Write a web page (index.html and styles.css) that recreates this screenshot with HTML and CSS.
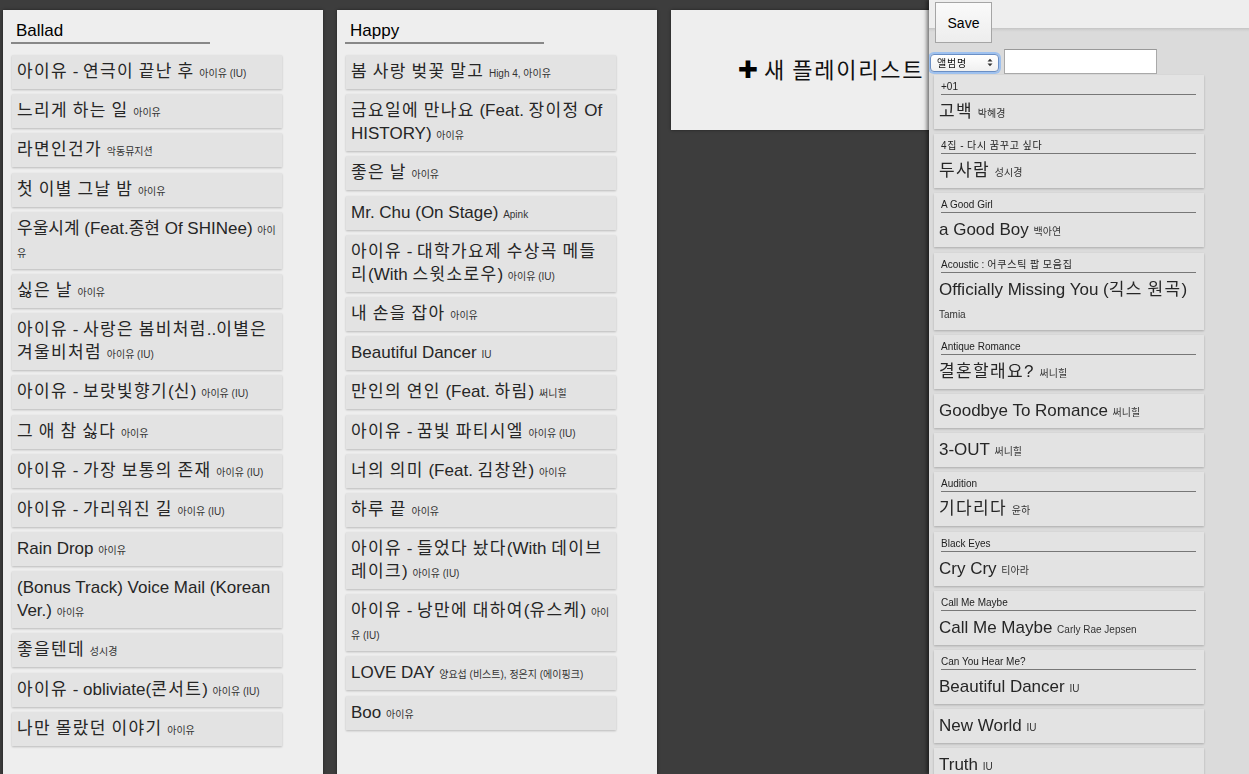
FILE: index.html
```html
<!DOCTYPE html>
<html lang="ko">
<head>
<meta charset="utf-8">
<title>Playlists</title>
<link rel="stylesheet" href="styles.css">
</head>
<body>
<main class="board">
  <section class="panel tall">
    <h2 class="panel-title">Ballad</h2>
    <ul class="songs">
      <li class="song"><span class="title"><span class="ko">아이유</span> - <span class="ko">연극이 끝난 후</span></span> <span class="artist">아이유 (IU)</span></li>
      <li class="song"><span class="title ko">느리게 하는 일</span> <span class="artist">아이유</span></li>
      <li class="song"><span class="title ko">라면인건가</span> <span class="artist">악동뮤지션</span></li>
      <li class="song"><span class="title ko">첫 이별 그날 밤</span> <span class="artist">아이유</span></li>
      <li class="song"><span class="title">우울시계 (Feat.종현 Of SHINee)</span> <span class="artist">아이유</span></li>
      <li class="song"><span class="title ko">싫은 날</span> <span class="artist">아이유</span></li>
      <li class="song"><span class="title"><span class="ko">아이유</span> - <span class="ko">사랑은 봄비처럼</span>..<span class="ko">이별은 겨울비처럼</span></span> <span class="artist">아이유 (IU)</span></li>
      <li class="song"><span class="title"><span class="ko">아이유</span> - <span class="ko">보랏빛향기</span>(<span class="ko">신</span>)</span> <span class="artist">아이유 (IU)</span></li>
      <li class="song"><span class="title ko">그 애 참 싫다</span> <span class="artist">아이유</span></li>
      <li class="song"><span class="title"><span class="ko">아이유</span> - <span class="ko">가장 보통의 존재</span></span> <span class="artist">아이유 (IU)</span></li>
      <li class="song"><span class="title"><span class="ko">아이유</span> - <span class="ko">가리워진 길</span></span> <span class="artist">아이유 (IU)</span></li>
      <li class="song"><span class="title">Rain Drop</span> <span class="artist">아이유</span></li>
      <li class="song"><span class="title">(Bonus Track) Voice Mail (Korean Ver.)</span> <span class="artist">아이유</span></li>
      <li class="song"><span class="title ko">좋을텐데</span> <span class="artist">성시경</span></li>
      <li class="song"><span class="title"><span class="ko">아이유</span> - obliviate(<span class="ko">콘서트</span>)</span> <span class="artist">아이유 (IU)</span></li>
      <li class="song"><span class="title ko">나만 몰랐던 이야기</span> <span class="artist">아이유</span></li>
    </ul>
  </section>

  <section class="panel tall">
    <h2 class="panel-title">Happy</h2>
    <ul class="songs">
      <li class="song"><span class="title ko">봄 사랑 벚꽃 말고</span> <span class="artist">High 4, 아이유</span></li>
      <li class="song"><span class="title"><span class="ko">금요일에 만나요</span> (Feat. <span class="ko">장이정</span> Of HISTORY)</span> <span class="artist">아이유</span></li>
      <li class="song"><span class="title ko">좋은 날</span> <span class="artist">아이유</span></li>
      <li class="song"><span class="title">Mr. Chu (On Stage)</span> <span class="artist">Apink</span></li>
      <li class="song"><span class="title"><span class="ko">아이유</span> - <span class="ko">대학가요제 수상곡 메들리</span>(With <span class="ko">스윗소로우</span>)</span> <span class="artist">아이유 (IU)</span></li>
      <li class="song"><span class="title ko">내 손을 잡아</span> <span class="artist">아이유</span></li>
      <li class="song"><span class="title">Beautiful Dancer</span> <span class="artist">IU</span></li>
      <li class="song"><span class="title"><span class="ko">만인의 연인</span> (Feat. <span class="ko">하림</span>)</span> <span class="artist">써니힐</span></li>
      <li class="song"><span class="title"><span class="ko">아이유</span> - <span class="ko">꿈빛 파티시엘</span></span> <span class="artist">아이유 (IU)</span></li>
      <li class="song"><span class="title"><span class="ko">너의 의미</span> (Feat. <span class="ko">김창완</span>)</span> <span class="artist">아이유</span></li>
      <li class="song"><span class="title ko">하루 끝</span> <span class="artist">아이유</span></li>
      <li class="song"><span class="title"><span class="ko">아이유</span> - <span class="ko">들었다 놨다</span>(With <span class="ko">데이브레이크</span>)</span> <span class="artist">아이유 (IU)</span></li>
      <li class="song"><span class="title"><span class="ko">아이유</span> - <span class="ko">낭만에 대하여</span>(<span class="ko">유스케</span>)</span> <span class="artist">아이유 (IU)</span></li>
      <li class="song"><span class="title">LOVE DAY</span> <span class="artist">양요섭 (비스트), 정은지 (에이핑크)</span></li>
      <li class="song"><span class="title">Boo</span> <span class="artist">아이유</span></li>
    </ul>
  </section>

  <section class="panel new-panel">
    <span class="new-label"><span class="plus">✚</span> <span class="ko">새 플레이리스트</span></span>
  </section>
</main>

<aside class="sidebar">
  <div class="side-top">
    <button class="save-btn" type="button">Save</button>
  </div>
  <div class="side-search">
    <div class="select-wrap">
      <select class="field-select">
        <option>앨범명</option>
        <option>곡명</option>
        <option>가수명</option>
      </select>
      <svg class="select-arrows" width="6" height="9" viewBox="0 0 6 9"><path d="M0.5 3.5 L3 0.8 L5.5 3.5 Z M0.5 5.5 L3 8.2 L5.5 5.5 Z" fill="#333"/></svg>
    </div>
    <input class="search-input" type="text">
  </div>
  <ul class="songs side-songs">
    <li class="song"><div class="album">+01</div><span class="title ko">고백</span> <span class="artist">박혜경</span></li>
    <li class="song"><div class="album ko">4집 - 다시 꿈꾸고 싶다</div><span class="title ko">두사람</span> <span class="artist">성시경</span></li>
    <li class="song"><div class="album">A Good Girl</div><span class="title">a Good Boy</span> <span class="artist">백아연</span></li>
    <li class="song"><div class="album">Acoustic : <span class="ko">어쿠스틱 팝 모음집</span></div><span class="title">Officially Missing You (<span class="ko">긱스 원곡</span>)</span> <span class="artist">Tamia</span></li>
    <li class="song"><div class="album">Antique Romance</div><span class="title ko">결혼할래요?</span> <span class="artist">써니힐</span></li>
    <li class="song"><span class="title">Goodbye To Romance</span> <span class="artist">써니힐</span></li>
    <li class="song"><span class="title">3-OUT</span> <span class="artist">써니힐</span></li>
    <li class="song"><div class="album">Audition</div><span class="title ko">기다리다</span> <span class="artist">윤하</span></li>
    <li class="song"><div class="album">Black Eyes</div><span class="title">Cry Cry</span> <span class="artist">티아라</span></li>
    <li class="song"><div class="album">Call Me Maybe</div><span class="title">Call Me Maybe</span> <span class="artist">Carly Rae Jepsen</span></li>
    <li class="song"><div class="album">Can You Hear Me?</div><span class="title">Beautiful Dancer</span> <span class="artist">IU</span></li>
    <li class="song"><span class="title">New World</span> <span class="artist">IU</span></li>
    <li class="song"><span class="title">Truth</span> <span class="artist">IU</span></li>
  </ul>
</aside>
</body>
</html>
```

FILE: styles.css
```css
html, body {
  margin: 0;
  padding: 0;
  height: 100%;
}

body {
  background: #3d3d3d;
  font-family: "Liberation Sans", "Noto Sans CJK KR", Arial, sans-serif;
  color: #222;
  overflow: hidden;
}

/* Hangul runs: widen to a full em per syllable, keep spaces as they are */
.ko {
  letter-spacing: 0.08em;
  word-spacing: -0.08em;
}

.board {
  display: flex;
  align-items: flex-start;
  gap: 14px;
  padding: 10px 0 0 3px;
}

.panel {
  flex: 0 0 320px;
  box-sizing: border-box;
  background: #eeeeee;
  box-shadow: 0 0 3px rgba(0, 0, 0, 0.45);
  padding: 10px 8px 0 8px;
}

.panel.tall {
  min-height: 790px;
}

.panel-title {
  margin: 0 0 11px 0;
  width: 194px;
  padding-left: 5px;
  font-size: 17px;
  font-weight: normal;
  line-height: 22px;
  color: #000;
  border-bottom: 2px solid #888;
}

.songs {
  list-style: none;
  margin: 0;
  padding: 0;
}

.song {
  width: 270px;
  box-sizing: border-box;
  margin: 0 0 5.2px 1px;
  padding: 5px 5px 6px 5px;
  background: #e3e3e3;
  box-shadow: 0 1px 2px rgba(0, 0, 0, 0.22);
  font-size: 17px;
  line-height: 23px;
}

.title {
  font-size: 17px;
  line-height: 23px;
  color: #262626;
}

.artist {
  font-size: 10px;
  line-height: 10px;
  color: #333;
}

.new-panel {
  height: 120px;
  display: flex;
  align-items: center;
  justify-content: center;
  padding: 0;
}

.new-label {
  font-size: 22px;
  line-height: 26px;
  color: #111;
  white-space: nowrap;
}

.plus {
  font-family: "DejaVu Sans", sans-serif;
  font-size: 24px;
  color: #000;
}

/* sidebar */
.sidebar {
  position: fixed;
  top: 0;
  right: 0;
  width: 320px;
  height: 100%;
  background: #dbdbdb;
  box-shadow: -2px 0 4px rgba(0, 0, 0, 0.55);
  overflow: hidden;
}

.side-top {
  height: 43px;
  box-sizing: border-box;
  padding: 2px 0 0 6px;
  background: linear-gradient(to bottom, #eeeeee 0, #eeeeee 28px, #c4c4c4 28px, #d2d2d2 30px, #dbdbdb 32px, #dbdbdb 100%);
}

.save-btn {
  width: 57px;
  height: 41px;
  margin: 0;
  padding: 0;
  font-family: "Liberation Sans", Arial, sans-serif;
  font-size: 14px;
  color: #000;
  background: linear-gradient(to bottom, #fafafa, #ededed);
  border: 1px solid #a5a5a5;
  border-radius: 0;
}

.side-search {
  display: flex;
  align-items: center;
  gap: 5px;
  margin-top: 6px;
  padding-left: 1px;
}

.select-wrap {
  position: relative;
  width: 69px;
  height: 18px;
}

.field-select {
  appearance: none;
  -webkit-appearance: none;
  width: 69px;
  height: 18px;
  box-sizing: border-box;
  margin: 0;
  padding: 0 0 0 6px;
  font-family: "Noto Sans CJK KR", sans-serif;
  font-size: 10px;
  line-height: 16px;
  letter-spacing: 0.08em;
  color: #111;
  background: linear-gradient(to bottom, #ffffff, #f0f0f0);
  border: 1px solid #6b8fc4;
  border-radius: 4px;
  box-shadow: 0 0 0 2px #9ec1ef;
}

.select-arrows {
  position: absolute;
  right: 6px;
  top: 5px;
  pointer-events: none;
}

.search-input {
  width: 153px;
  height: 25px;
  box-sizing: border-box;
  margin: 0;
  border: 1px solid #a9a9a9;
  border-top-color: #999;
  background: #fff;
  padding: 0 3px;
}

.side-songs {
  padding: 1px 0 0 4px;
}

.album {
  font-size: 10px;
  line-height: 14px;
  color: #222;
  margin: 0 3px 5px 2px;
  border-bottom: 1px solid #777;
}
```
